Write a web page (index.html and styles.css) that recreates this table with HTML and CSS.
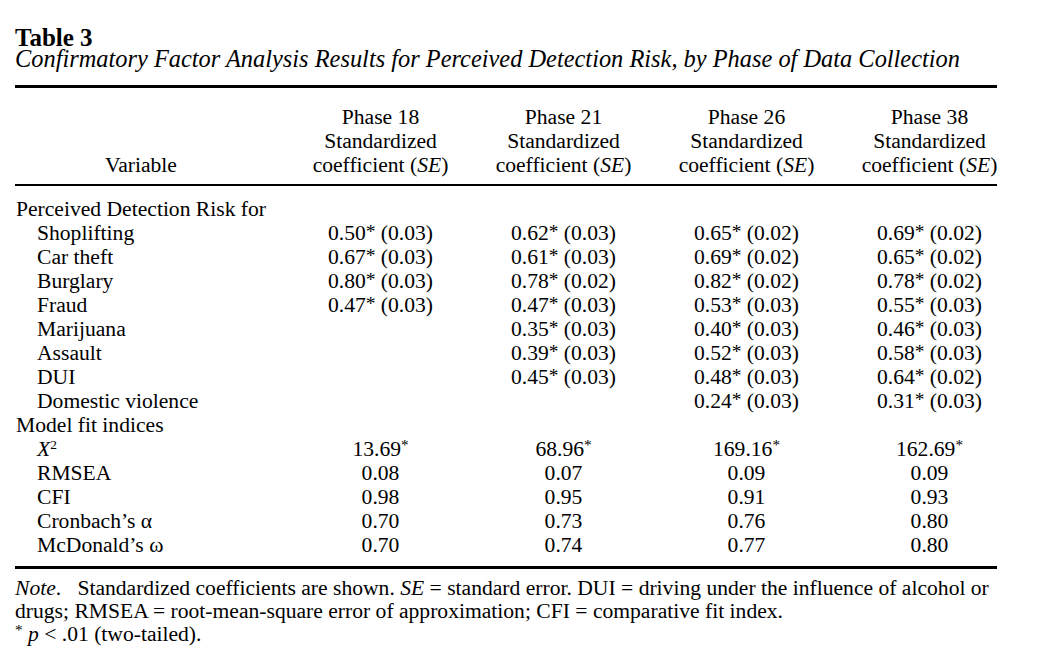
FILE: index.html
```html
<!DOCTYPE html>
<html lang="en">
<head>
<meta charset="utf-8">
<title>Table 3</title>
<link rel="stylesheet" href="styles.css">
</head>
<body>
<div class="page">
  <div class="title">Table 3</div>
  <div class="caption">Confirmatory Factor Analysis Results for Perceived Detection Risk, by Phase of Data Collection</div>
  <div class="table">
    <div class="head">
      <div class="var">Variable</div>
      <div class="hcell">Phase 18<br>Standardized<br>coefficient (<i>SE</i>)</div>
      <div class="hcell">Phase 21<br>Standardized<br>coefficient (<i>SE</i>)</div>
      <div class="hcell">Phase 26<br>Standardized<br>coefficient (<i>SE</i>)</div>
      <div class="hcell">Phase 38<br>Standardized<br>coefficient (<i>SE</i>)</div>
    </div>
    <div class="body">
      <div class="row"><div class="label group">Perceived Detection Risk for</div></div>
      <div class="row"><div class="label">Shoplifting</div><div class="num">0.50<sup>*</sup> (0.03)</div><div class="num">0.62<sup>*</sup> (0.03)</div><div class="num">0.65<sup>*</sup> (0.02)</div><div class="num">0.69<sup>*</sup> (0.02)</div></div>
      <div class="row"><div class="label">Car theft</div><div class="num">0.67<sup>*</sup> (0.03)</div><div class="num">0.61<sup>*</sup> (0.03)</div><div class="num">0.69<sup>*</sup> (0.02)</div><div class="num">0.65<sup>*</sup> (0.02)</div></div>
      <div class="row"><div class="label">Burglary</div><div class="num">0.80<sup>*</sup> (0.03)</div><div class="num">0.78<sup>*</sup> (0.02)</div><div class="num">0.82<sup>*</sup> (0.02)</div><div class="num">0.78<sup>*</sup> (0.02)</div></div>
      <div class="row"><div class="label">Fraud</div><div class="num">0.47<sup>*</sup> (0.03)</div><div class="num">0.47<sup>*</sup> (0.03)</div><div class="num">0.53<sup>*</sup> (0.03)</div><div class="num">0.55<sup>*</sup> (0.03)</div></div>
      <div class="row"><div class="label">Marijuana</div><div class="num"></div><div class="num">0.35<sup>*</sup> (0.03)</div><div class="num">0.40<sup>*</sup> (0.03)</div><div class="num">0.46<sup>*</sup> (0.03)</div></div>
      <div class="row"><div class="label">Assault</div><div class="num"></div><div class="num">0.39<sup>*</sup> (0.03)</div><div class="num">0.52<sup>*</sup> (0.03)</div><div class="num">0.58<sup>*</sup> (0.03)</div></div>
      <div class="row"><div class="label">DUI</div><div class="num"></div><div class="num">0.45<sup>*</sup> (0.03)</div><div class="num">0.48<sup>*</sup> (0.03)</div><div class="num">0.64<sup>*</sup> (0.02)</div></div>
      <div class="row"><div class="label">Domestic violence</div><div class="num"></div><div class="num"></div><div class="num">0.24<sup>*</sup> (0.03)</div><div class="num">0.31<sup>*</sup> (0.03)</div></div>
      <div class="row"><div class="label group">Model fit indices</div></div>
      <div class="row"><div class="label"><i>X</i><sup class="sq">2</sup></div><div class="num">13.69<sup class="sm">*</sup></div><div class="num">68.96<sup class="sm">*</sup></div><div class="num">169.16<sup class="sm">*</sup></div><div class="num">162.69<sup class="sm">*</sup></div></div>
      <div class="row"><div class="label">RMSEA</div><div class="num">0.08</div><div class="num">0.07</div><div class="num">0.09</div><div class="num">0.09</div></div>
      <div class="row"><div class="label">CFI</div><div class="num">0.98</div><div class="num">0.95</div><div class="num">0.91</div><div class="num">0.93</div></div>
      <div class="row"><div class="label">Cronbach’s α</div><div class="num">0.70</div><div class="num">0.73</div><div class="num">0.76</div><div class="num">0.80</div></div>
      <div class="row"><div class="label">McDonald’s ω</div><div class="num">0.70</div><div class="num">0.74</div><div class="num">0.77</div><div class="num">0.80</div></div>
    </div>
  </div>
  <div class="note">
    <p><i>Note</i>.&nbsp;&nbsp; Standardized coefficients are shown. <i>SE</i> = standard error. DUI = driving under the influence of alcohol or drugs; RMSEA = root-mean-square error of approximation; CFI = comparative fit index.</p>
    <p><sup class="sm">*</sup>&nbsp;<i>p</i> &lt; .01 (two-tailed).</p>
  </div>
</div>
</body>
</html>
```

FILE: styles.css
```css
html, body {
  margin: 0;
  background: #fff;
  color: #000;
}
body {
  font-family: "Liberation Serif", "Times New Roman", serif;
  font-size: 21.6px;
}
.page {
  width: 982px;
  padding: 28px 0 0 15px;
}
.title {
  font-weight: bold;
  font-size: 25px;
  line-height: 20px;
}
.caption {
  font-style: italic;
  font-size: 24.4px;
  line-height: 22px;
  margin-bottom: 15px;
}
.table {
  border-top: 3px solid #000;
  border-bottom: 3px solid #000;
}
.head {
  display: grid;
  grid-template-columns: 274px 183px 183px 183px 1fr;
  line-height: 24px;
  padding: 17px 0 7px;
  border-bottom: 2px solid #000;
}
.head .var {
  align-self: end;
  text-align: center;
  padding-right: 22px;
}
.hcell {
  text-align: center;
}
.hcell:last-child {
  margin-right: -24px;
}
.body {
  padding: 11px 0 9px;
}
.row {
  display: grid;
  grid-template-columns: 274px 183px 183px 183px 1fr;
  line-height: 24px;
  height: 24px;
}
.label {
  padding-left: 22px;
  white-space: nowrap;
}
.label.group {
  padding-left: 1px;
}
.num {
  text-align: center;
  white-space: nowrap;
}
.num:last-child {
  margin-right: -24px;
}
sup {
  font-size: 0.9em;
  line-height: 0;
  vertical-align: 0.12em;
}
sup.sq {
  font-size: 0.62em;
  vertical-align: 0.5em;
}
sup.sm {
  font-size: 0.7em;
  vertical-align: 0.4em;
}
.note {
  padding-top: 8px;
  line-height: 23px;
}
.note p {
  margin: 0;
}
```
